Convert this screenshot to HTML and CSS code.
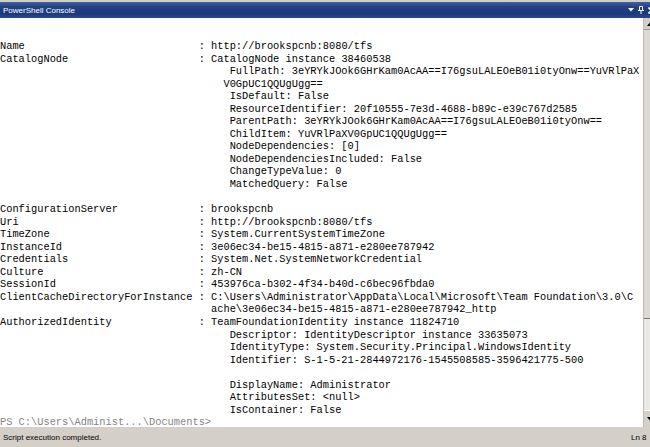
FILE: index.html
```html
<!DOCTYPE html>
<html lang="en">
<head>
    <meta charset="UTF-8">
    <meta name="viewport" content="width=device-width, initial-scale=1.0">
    <title>PowerShell Console</title>
    <link rel="stylesheet" href="styles.css">
</head>
<body>

    <div class="window">
        <!-- Tool window caption -->
        <div class="titlebar">
            <span class="title">PowerShell Console</span>
            <div class="title-buttons">
                <svg width="6" height="4" viewBox="0 0 6 4"><polygon points="0,0 6,0 3,3.5" fill="#fff"/></svg>
                <svg width="6" height="8" viewBox="0 0 6 8"><path d="M1.5 0.5h3v4h-3z M0 4.5h6 M3 4.5v3.5" stroke="#fff" stroke-width="1" fill="none"/></svg>
                <svg width="7" height="7" viewBox="0 0 7 7"><path d="M0.5 0.5l6 6 M6.5 0.5l-6 6" stroke="#fff" stroke-width="1.6"/></svg>
            </div>
        </div>

        <div class="console-area">
            <div class="console">
                <div class="prop"><span class="key">Name</span><span class="sep">:</span><span class="val">http://brookspcnb:8080/tfs</span></div>
                <div class="prop"><span class="key">CatalogNode</span><span class="sep">:</span>
                    <div class="val">
                        <div>CatalogNode instance 38460538</div>
                        <div class="sub">FullPath: 3eYRYkJOok6GHrKam0AcAA==I76gsuLALEOeB01i0tyOnw==YuVRlPaX</div>
                        <div class="wrap">V0GpUC1QQUgUgg==</div>
                        <div class="sub">IsDefault: False</div>
                        <div class="sub">ResourceIdentifier: 20f10555-7e3d-4688-b89c-e39c767d2585</div>
                        <div class="sub">ParentPath: 3eYRYkJOok6GHrKam0AcAA==I76gsuLALEOeB01i0tyOnw==</div>
                        <div class="sub">ChildItem: YuVRlPaXV0GpUC1QQUgUgg==</div>
                        <div class="sub">NodeDependencies: [0]</div>
                        <div class="sub">NodeDependenciesIncluded: False</div>
                        <div class="sub">ChangeTypeValue: 0</div>
                        <div class="sub">MatchedQuery: False</div>
                    </div>
                </div>
                <div class="blank"></div>
                <div class="prop"><span class="key">ConfigurationServer</span><span class="sep">:</span><span class="val">brookspcnb</span></div>
                <div class="prop"><span class="key">Uri</span><span class="sep">:</span><span class="val">http://brookspcnb:8080/tfs</span></div>
                <div class="prop"><span class="key">TimeZone</span><span class="sep">:</span><span class="val">System.CurrentSystemTimeZone</span></div>
                <div class="prop"><span class="key">InstanceId</span><span class="sep">:</span><span class="val">3e06ec34-be15-4815-a871-e280ee787942</span></div>
                <div class="prop"><span class="key">Credentials</span><span class="sep">:</span><span class="val">System.Net.SystemNetworkCredential</span></div>
                <div class="prop"><span class="key">Culture</span><span class="sep">:</span><span class="val">zh-CN</span></div>
                <div class="prop"><span class="key">SessionId</span><span class="sep">:</span><span class="val">453976ca-b302-4f34-b40d-c6bec96fbda0</span></div>
                <div class="prop"><span class="key">ClientCacheDirectoryForInstance</span><span class="sep">:</span>
                    <div class="val">
                        <div>C:\Users\Administrator\AppData\Local\Microsoft\Team Foundation\3.0\C</div>
                        <div>ache\3e06ec34-be15-4815-a871-e280ee787942_http</div>
                    </div>
                </div>
                <div class="prop"><span class="key">AuthorizedIdentity</span><span class="sep">:</span>
                    <div class="val">
                        <div>TeamFoundationIdentity instance 11824710</div>
                        <div class="sub">Descriptor: IdentityDescriptor instance 33635073</div>
                        <div class="sub">IdentityType: System.Security.Principal.WindowsIdentity</div>
                        <div class="sub">Identifier: S-1-5-21-2844972176-1545508585-3596421775-500</div>
                        <div class="blank"></div>
                        <div class="sub">DisplayName: Administrator</div>
                        <div class="sub">AttributesSet: &lt;null&gt;</div>
                        <div class="sub">IsContainer: False</div>
                    </div>
                </div>
                <div class="prompt">PS C:\Users\Administ...\Documents&gt;</div>
            </div>

            <div class="scrollbar">
                <div class="sb-btn"><svg width="7" height="4" viewBox="0 0 7 4"><polygon points="0,4 7,4 3.5,0" fill="#000"/></svg></div>
                <div class="sb-thumb"></div>
                <div class="sb-track"></div>
                <div class="sb-btn"><svg width="7" height="4" viewBox="0 0 7 4"><polygon points="0,0 7,0 3.5,4" fill="#000"/></svg></div>
            </div>
        </div>

        <div class="statusbar">
            <span>Script execution completed.</span>
            <span class="status-pos">Ln 8</span>
        </div>
    </div>

</body>
</html>
```

FILE: styles.css
```css
html, body {
    margin: 0;
    height: 100%;
    overflow: hidden;
}
body {
    background: #fff;
}
.window {
    width: 660px;
    height: 447px;
    display: flex;
    flex-direction: column;
}
.titlebar {
    height: 16px;
    border-top: 2px solid #d4d0c8;
    background: linear-gradient(#3f5f9f 0%, #203f80 35%, #1c3a7a 75%, #2a4a8c 100%);
    color: #fff;
    font-family: "Liberation Sans", Arial, sans-serif;
    font-size: 8px;
    display: flex;
    align-items: center;
    justify-content: space-between;
    padding: 0 5px 0 3px;
    flex: none;
}
.title-buttons {
    display: flex;
    align-items: center;
    gap: 4px;
}
.title-buttons svg {
    display: block;
}
.console-area {
    flex: 1;
    display: flex;
    min-height: 0;
}
.console {
    flex: 1;
    overflow: hidden;
    padding-top: 22px;
    font-family: "Liberation Mono", "Courier New", monospace;
    font-size: 10.35px;
    line-height: 12.55px;
    color: #000;
    white-space: nowrap;
}
.prop {
    display: flex;
}
.key {
    width: 32ch;
    flex: none;
}
.sep {
    width: 2ch;
    flex: none;
}
.sub {
    padding-left: 3ch;
}
.wrap {
    padding-left: 2ch;
}
.blank {
    height: 12.55px;
}
.prompt {
    color: #858585;
}
/* classic scrollbar, mostly cut off by the window edge */
.scrollbar {
    width: 16px;
    flex: none;
    display: flex;
    flex-direction: column;
    background: #ebe9e4;
    border-left: 1px solid #bfbbb2;
}
.sb-btn {
    height: 11px;
    background: #d4d0c8;
    border-bottom: 1px solid #a09c94;
    display: flex;
    align-items: center;
    padding-left: 3px;
}
.sb-btn:last-child {
    border-bottom: none;
    border-top: 1px solid #fff;
    height: 16px;
}
.sb-thumb {
    height: 288px;
    background: #dcd9d2;
    border-bottom: 1px solid #7a766e;
}
.sb-track {
    flex: 1;
}
.statusbar {
    height: 20px;
    flex: none;
    background: #d4d0c8;
    font-family: "Liberation Sans", Arial, sans-serif;
    font-size: 8px;
    color: #000;
    display: flex;
    align-items: center;
    padding-left: 3px;
}
.status-pos {
    margin-left: auto;
    width: 29px;
}
```
